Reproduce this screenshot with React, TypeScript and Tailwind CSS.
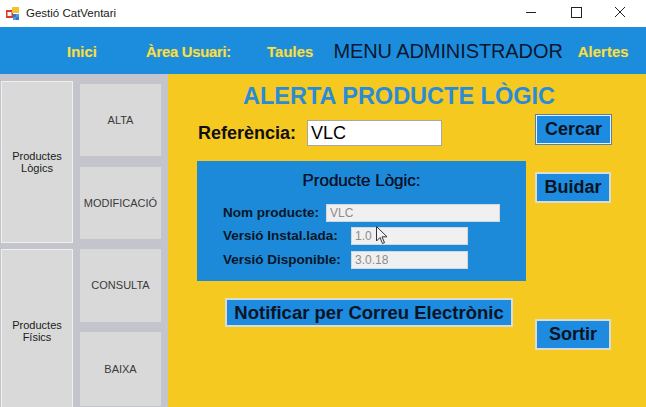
import React from "react";

const menuText = "text-[15px] font-bold text-[#efe25c] [text-shadow:0_0_1px_#8a8a40]";

function SideBtn({ label, h, className = "" }: { label: string; h: string; className?: string }) {
  return (
    <div className={`${h} w-[81px] bg-[#d9d9d9] flex items-center justify-center text-[11px] text-[#3a3a3a] ${className}`}>
      {label}
    </div>
  );
}

function BlueBtn({ label, className = "", variant = "light" }: { label: string; className?: string; variant?: "light" | "dark" }) {
  const border =
    variant === "dark"
      ? "border border-[#5b7ea6] shadow-[inset_0_0_0_1px_#e8f2fc]"
      : "border-2 border-[#dcdcd2]";
  return (
    <div className={`bg-[#1c8be0] ${border} flex items-center justify-center font-bold text-[#0b1422] ${className}`}>
      {label}
    </div>
  );
}

export default function App() {
  return (
    <div className="w-[646px] h-[407px] overflow-hidden flex flex-col font-['Liberation_Sans',Arial,sans-serif] relative">
      {/* Title bar */}
      <div className="h-[27px] bg-white flex items-center flex-none">
        <svg className="ml-[6px]" width="13" height="13" viewBox="0 0 13 13">
          <rect x="0" y="3" width="7" height="8" fill="#d83a2e" />
          <rect x="1.5" y="5" width="4" height="4" fill="#f4f4f4" />
          <rect x="6" y="0" width="7" height="6" fill="#f2c230" />
          <rect x="7" y="7" width="3" height="3" fill="#2e78d0" />
          <rect x="10" y="7" width="3" height="3" fill="#4a9be0" />
          <rect x="7" y="10" width="3" height="3" fill="#4a9be0" />
          <rect x="10" y="10" width="3" height="3" fill="#2e78d0" />
        </svg>
        <span className="ml-[7px] text-[11.5px] text-[#1a1a1a]">Gestió CatVentari</span>
        <div className="ml-auto flex items-center h-full">
          <svg width="46" height="27" viewBox="0 0 46 27">
            <line x1="18" y1="12.5" x2="28" y2="12.5" stroke="#222" strokeWidth="1" />
          </svg>
          <svg width="46" height="27" viewBox="0 0 46 27">
            <rect x="17.5" y="7.5" width="10" height="10" fill="none" stroke="#222" strokeWidth="1" />
          </svg>
          <svg width="46" height="27" viewBox="0 0 46 27">
            <line x1="15" y1="7" x2="25" y2="17" stroke="#222" strokeWidth="1" />
            <line x1="25" y1="7" x2="15" y2="17" stroke="#222" strokeWidth="1" />
          </svg>
        </div>
      </div>

      {/* Menu bar */}
      <div className="h-[47px] bg-[#1c8ddd] flex items-center flex-none pt-[3px]">
        <span className={`ml-[67px] ${menuText}`}>Inici</span>
        <span className={`ml-[49px] w-[86px] whitespace-nowrap tracking-[-0.35px] ${menuText}`}>Àrea Usuari:</span>
        <span className={`ml-[35px] ${menuText}`}>Taules</span>
        <span className="ml-[20px] text-[20px] text-[#0b1730] whitespace-nowrap tracking-[-0.1px] -mt-[3px]">MENU ADMINISTRADOR</span>
        <span className={`ml-[15px] ${menuText}`}>Alertes</span>
      </div>

      {/* Body */}
      <div className="flex-1 flex min-h-0">
        {/* Sidebar */}
        <div className="w-[168px] bg-[#c4c4cc] flex flex-none pl-[1px]">
          <div className="w-[72px] flex flex-col pt-[7px] gap-[6px]">
            <div className="h-[162px] flex-none bg-[#d9d9d9] border border-[#efefef] flex items-center justify-center text-center text-[11px] leading-[12px] text-[#1a1a1a]">
              Productes<br />Lògics
            </div>
            <div className="h-[164px] flex-none bg-[#d9d9d9] border border-[#efefef] flex items-center justify-center text-center text-[11px] leading-[12px] text-[#1a1a1a]">
              Productes<br />Físics
            </div>
          </div>
          <div className="ml-[7px] flex flex-col pt-[10px]">
            <SideBtn label="ALTA" h="h-[72px]" />
            <SideBtn label="MODIFICACIÓ" h="h-[72px]" className="mt-[11px]" />
            <SideBtn label="CONSULTA" h="h-[73px]" className="mt-[10px]" />
            <SideBtn label="BAIXA" h="h-[74px]" className="mt-[10px]" />
          </div>
        </div>

        {/* Main */}
        <div className="flex-1 bg-[#f6c920] flex flex-col pt-[9px]">
          <div className="ml-[75px] h-[27px] leading-[27px] text-[23.5px] font-bold text-[#2a8bd9] whitespace-nowrap">
            ALERTA PRODUCTE LÒGIC
          </div>
          <div className="flex">
            {/* left column */}
            <div className="ml-[29px] w-[329px] flex flex-col">
              <div className="mt-[10px] flex items-center h-[26px]">
                <span className="ml-[1px] text-[18px] font-bold text-[#101010]">Referència:</span>
                <div className="ml-[11px] w-[135px] h-[26px] bg-white border border-[#a8a8a0] flex items-center pl-[3px] text-[18px] text-black">
                  VLC
                </div>
              </div>
              <div className="mt-[15px] h-[120px] bg-[#1c8ad9] flex flex-col pt-[10px]">
                <div className="h-[20px] leading-[20px] text-center text-[17px] text-[#08142a] [text-shadow:0_0_0.4px_#08142a]">Producte Lògic:</div>
                <div className="mt-[13px] flex items-center h-[18px]">
                  <span className="ml-[26px] w-[103px] text-[13.5px] font-bold text-[#0a1626] whitespace-nowrap">Nom producte:</span>
                  <div className="w-[174px] h-[18px] bg-[#f0f0f0] border border-[#d4d8dc] flex items-center pl-[3px] text-[12px] text-[#8c8c8c]">VLC</div>
                </div>
                <div className="mt-[5px] flex items-center h-[18px]">
                  <span className="ml-[26px] w-[128px] text-[13.5px] font-bold text-[#0a1626] whitespace-nowrap">Versió Instal.lada:</span>
                  <div className="w-[117px] h-[18px] bg-[#f0f0f0] border border-[#d4d8dc] flex items-center pl-[3px] text-[12px] text-[#8c8c8c]">1.0</div>
                </div>
                <div className="mt-[6px] flex items-center h-[18px]">
                  <span className="ml-[26px] w-[128px] text-[13.5px] font-bold text-[#0a1626] whitespace-nowrap">Versió Disponible:</span>
                  <div className="w-[117px] h-[18px] bg-[#f0f0f0] border border-[#d4d8dc] flex items-center pl-[3px] text-[12px] text-[#8c8c8c]">3.0.18</div>
                </div>
              </div>
              <BlueBtn label="Notificar per Correu Electrònic" className="mt-[17px] ml-[28px] w-[288px] h-[29px] whitespace-nowrap text-[18.5px]" />
            </div>
            {/* right column */}
            <div className="ml-[9px] flex flex-col">
              <BlueBtn label="Cercar" variant="dark" className="mt-[4px] w-[77px] h-[31px] text-[18px]" />
              <BlueBtn label="Buidar" className="mt-[27px] w-[76px] h-[31px] text-[18px]" />
              <BlueBtn label="Sortir" className="mt-[116px] w-[76px] h-[31px] text-[18px]" />
            </div>
          </div>
        </div>
      </div>

      {/* mouse cursor */}
      <svg className="absolute left-[376px] top-[226px]" width="12" height="19" viewBox="0 0 12 19">
        <path d="M0.5 0.5 L0.5 15 L4 11.5 L6.5 17.5 L8.5 16.7 L6 10.8 L11 10.8 Z" fill="#f4f4f4" stroke="#333" strokeWidth="1" strokeLinejoin="round" />
      </svg>
    </div>
  );
}
